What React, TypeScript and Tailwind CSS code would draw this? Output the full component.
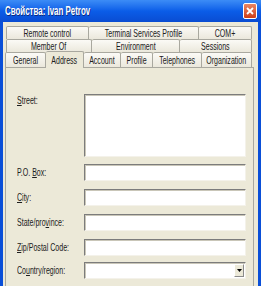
import { ReactNode } from 'react'

const FONT = { fontFamily: '"Liberation Sans", Arial, sans-serif' }

function Squeeze({ children, className = '' }: { children: ReactNode; className?: string }) {
  return <span className={`inline-block whitespace-nowrap scale-x-[0.64] ${className}`}>{children}</span>
}

function Tab({ label, w, first }: { label: string; w: string; first?: boolean }) {
  return (
    <div
      className={`${w} h-full flex items-center justify-center bg-gradient-to-b from-[#fbfaf6] to-[#ebe8dc] border-t border-r border-[#a9a89f] rounded-t-[2px] text-[11px] text-[#202020] ${first ? 'border-l' : ''}`}
    >
      <Squeeze>{label}</Squeeze>
    </div>
  )
}

function Field({ label, dropdown }: { label: ReactNode; dropdown?: boolean }) {
  return (
    <div className="flex items-center h-[17px]">
      <div className="w-[67px] text-[11px] text-[#202020] leading-none">
        <Squeeze className="origin-left">{label}</Squeeze>
      </div>
      <div className="w-[162px] h-full bg-white border-t border-l border-[#7c7c7c] border-b border-r border-b-[#f4f2ea] border-r-[#f4f2ea] shadow-[inset_1px_1px_0_#c9c6b8] flex justify-end items-center pr-[1px]">
        {dropdown && (
          <div className="w-[10px] h-[13px] bg-[#ece9d8] border border-[#fff] border-r-[#8b8b8b] border-b-[#8b8b8b] flex items-center justify-center">
            <svg width="5" height="3" viewBox="0 0 5 3">
              <path d="M0 0h5L2.5 3z" fill="#000" />
            </svg>
          </div>
        )}
      </div>
    </div>
  )
}

export default function App() {
  return (
    <div className="w-[261px] h-[286px] overflow-hidden bg-[#0a4fd8] px-[3px] flex flex-col" style={FONT}>
      {/* Title bar */}
      <div className="h-[22px] -mx-[3px] px-[5px] flex items-center justify-between bg-gradient-to-b from-[#3c8cf6] via-[#0b5de8] to-[#0a4cd2]">
        <span className="text-white font-bold text-[12px] inline-block whitespace-nowrap scale-x-[0.66] origin-left [text-shadow:1px_1px_0_#0a2a80]">
          Свойства: Ivan Petrov
        </span>
        <div className="w-[14px] h-[16px] rounded-[2px] border border-white bg-gradient-to-b from-[#e98563] to-[#cc3c15] flex items-center justify-center mr-[-1px]">
          <svg width="8" height="8" viewBox="0 0 8 8">
            <path d="M1 1l6 6M7 1L1 7" stroke="#fff" strokeWidth="1.8" />
          </svg>
        </div>
      </div>

      {/* Body */}
      <div className="flex-1 bg-[#ece9d8] pl-[2px] pr-[4px] pt-[4px] flex flex-col">
        <div className="flex h-[13px] ml-[1px]">
          <Tab label="Remote control" w="w-[83px]" first />
          <Tab label="Terminal Services Profile" w="w-[110px]" />
          <Tab label="COM+" w="w-[53px]" />
        </div>
        <div className="flex h-[13px] ml-[1px]">
          <Tab label="Member Of" w="w-[86px]" first />
          <Tab label="Environment" w="w-[88px]" />
          <Tab label="Sessions" w="w-[72px]" />
        </div>
        <div className="flex h-[15px] items-end relative z-10">
          <Tab label="General" w="w-[41px]" first />
          <div className="w-[38px] h-[17px] -mb-[1px] flex items-center justify-center bg-[#ece9d8] border-t border-r border-[#a9a89f] rounded-t-[2px] text-[11px] text-[#202020]">
            <Squeeze>Address</Squeeze>
          </div>
          <Tab label="Account" w="w-[37px]" />
          <Tab label="Profile" w="w-[32px]" />
          <Tab label="Telephones" w="w-[49px]" />
          <Tab label="Organization" w="w-[50px]" />
        </div>

        {/* Panel */}
        <div className="flex-1 border border-[#a9a89f] border-b-0 bg-[#ece9d8] pl-[11px] pt-[26px] flex flex-col">
          <div className="flex h-[63px]">
            <div className="w-[67px] pt-[1px] text-[11px] text-[#202020] leading-none">
              <Squeeze className="origin-left">
                <u>S</u>treet:
              </Squeeze>
            </div>
            <div className="w-[162px] h-full bg-white border-t border-l border-[#7c7c7c] border-b border-r border-b-[#f4f2ea] border-r-[#f4f2ea] shadow-[inset_1px_1px_0_#c9c6b8]" />
          </div>
          <div className="flex flex-col gap-[8px] mt-[7px]">
            <Field label={<>P.O. <u>B</u>ox:</>} />
            <Field label={<><u>C</u>ity:</>} />
            <Field label={<>State/pro<u>v</u>ince:</>} />
            <Field label={<><u>Z</u>ip/Postal Code:</>} />
          </div>
          <div className="mt-[6px]">
            <Field label={<>Co<u>u</u>ntry/region:</>} dropdown />
          </div>
        </div>
      </div>
    </div>
  )
}
